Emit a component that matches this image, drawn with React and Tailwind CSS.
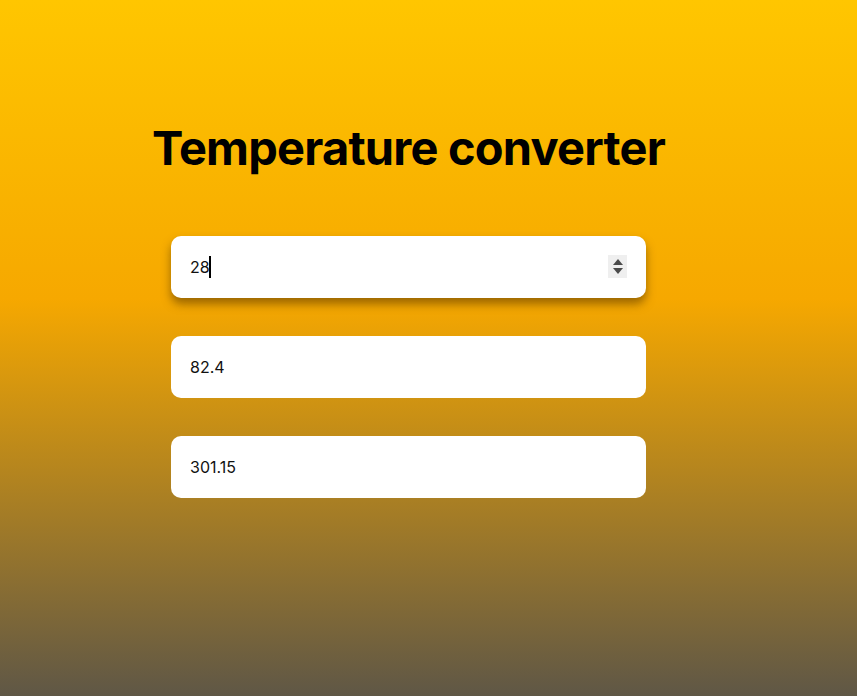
import { useState } from 'react';

const Spinner = () => (
  <div className="absolute right-[19px] top-[19px] flex h-[23px] w-[19px] flex-col items-center justify-center gap-[3px] bg-[#efefef]">
    <svg width="10" height="6" viewBox="0 0 10 6">
      <path d="M5 0 L10 6 L0 6 Z" fill="#4b4b4b" />
    </svg>
    <svg width="10" height="6" viewBox="0 0 10 6">
      <path d="M0 0 L10 0 L5 6 Z" fill="#4b4b4b" />
    </svg>
  </div>
);

const App = () => {
  const [celsius] = useState('28');

  return (
    <div
      className="min-h-[696px] w-full bg-[linear-gradient(to_bottom,#ffc600_0%,#f6a800_43%,#5f5746_100%)] pr-10"
      style={{ fontFamily: 'Inter, "Noto Sans", sans-serif' }}
    >
      <div className="flex flex-col items-center pt-[118px]">
        <h1 className="text-[47px] font-bold leading-[60px] tracking-[-0.8px] text-black">
          Temperature converter
        </h1>

        <div className="mt-[58px] flex w-[475px] flex-col gap-[38px]">
          {/* Celsius (focused) */}
          <div className="relative flex h-[62px] items-center rounded-[10px] bg-white px-[19px] shadow-[0_6px_10px_rgba(80,50,0,0.55)]">
            <span className="text-[16px] text-[#111]">{celsius}</span>
            <span className="-ml-px h-[22px] w-[2px] bg-black" />
            <Spinner />
          </div>

          {/* Fahrenheit */}
          <input
            type="text"
            readOnly
            value="82.4"
            className="h-[62px] rounded-[10px] bg-white px-[19px] text-[16px] text-[#111] outline-none"
          />

          {/* Kelvin */}
          <input
            type="text"
            readOnly
            value="301.15"
            className="h-[62px] rounded-[10px] bg-white px-[19px] text-[16px] text-[#111] outline-none"
          />
        </div>
      </div>
    </div>
  );
};

export default App;
